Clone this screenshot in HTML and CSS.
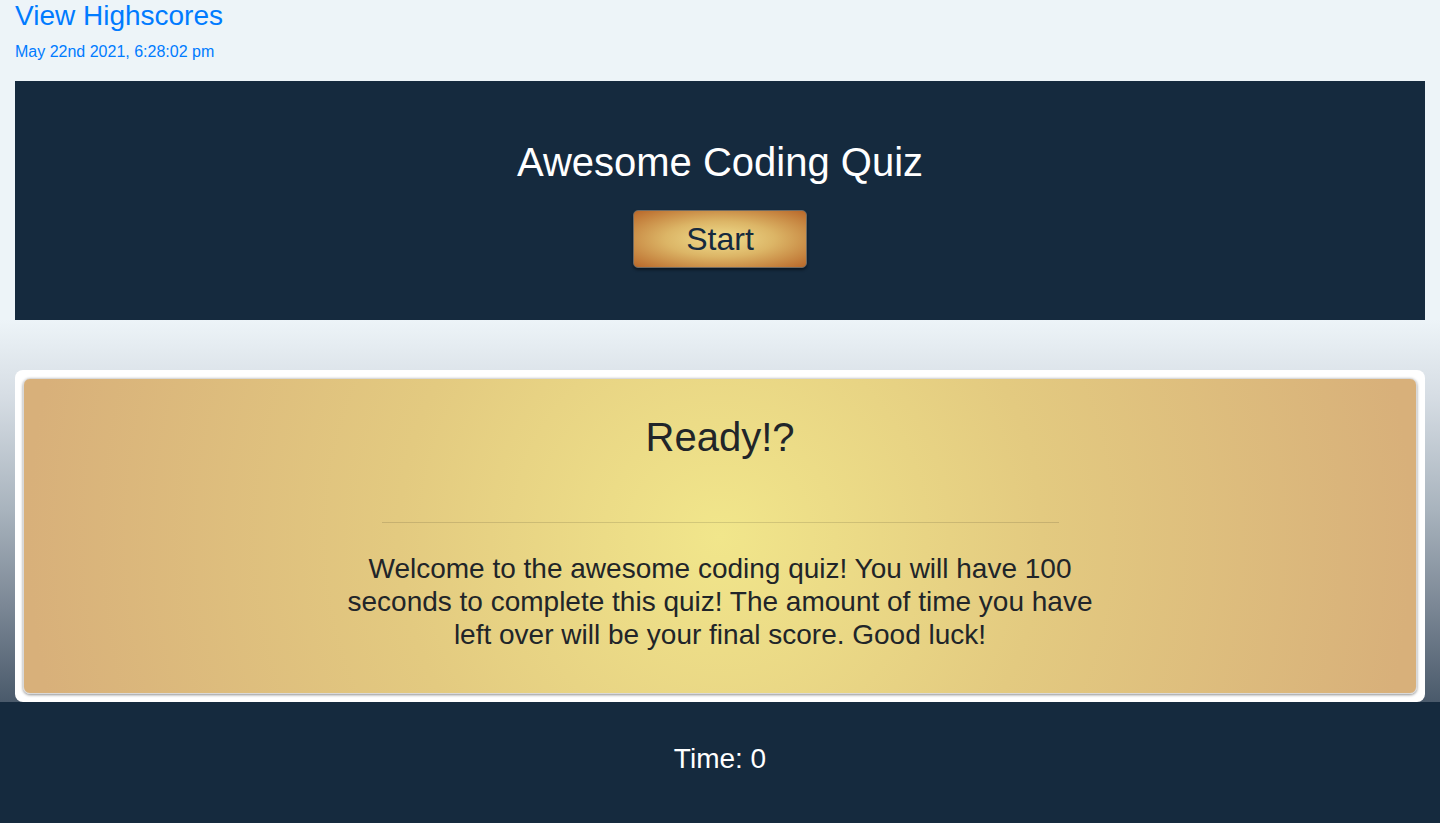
FILE: index.html
```html
<!DOCTYPE html>
<html lang="en">
<head>
<meta charset="utf-8">
<title>Awesome Coding Quiz</title>
<link rel="stylesheet" href="styles.css">
</head>
<body>
  <div class="top">
    <a class="highscores" href="#">View Highscores</a>
    <p class="date">May 22nd 2021, 6:28:02 pm</p>
  </div>
  <header class="hero">
    <h1 class="hero-title">Awesome Coding Quiz</h1>
    <button class="start-btn" type="button">Start</button>
  </header>
  <main class="stage">
    <div class="card-frame">
      <section class="card">
        <h2 class="card-title">Ready!?</h2>
        <hr class="card-rule">
        <p class="card-text">Welcome to the awesome coding quiz! You will have 100 seconds to complete this quiz! The amount of time you have left over will be your final score. Good luck!</p>
      </section>
    </div>
  </main>
  <footer class="footer">
    <p class="timer">Time: 0</p>
  </footer>
</body>
</html>
```

FILE: styles.css
```css
* { box-sizing: border-box; }

html, body {
  margin: 0;
  padding: 0;
}

body {
  font-family: "Liberation Sans", Arial, Helvetica, sans-serif;
  background: #edf4f8;
  color: #212529;
  min-height: 823px;
  display: flex;
  flex-direction: column;
}

.top {
  padding: 0 15px;
  display: flex;
  flex-direction: column;
  align-items: flex-start;
}

.highscores {
  color: #007bff;
  text-decoration: none;
  font-size: 28px;
  line-height: 32px;
}

.date {
  margin: 11px 0 0;
  color: #007bff;
  font-size: 16px;
  line-height: 18px;
}

.hero {
  margin: 20px 15px 0;
  height: 239px;
  background: #152a3e;
  display: flex;
  flex-direction: column;
  align-items: center;
  padding-top: 58px;
}

.hero-title {
  margin: 0;
  color: #ffffff;
  font-weight: 400;
  font-size: 40px;
  line-height: 46px;
}

.start-btn {
  margin-top: 25px;
  width: 174px;
  height: 58px;
  border: 1px solid #6f6a62;
  border-radius: 5px;
  background: radial-gradient(ellipse at center, #f0de8e 0%, #dcb566 45%, #b9682a 100%);
  box-shadow: 0 2px 3px rgba(0, 0, 0, 0.45);
  color: #152a3e;
  font-family: "Liberation Sans", Arial, Helvetica, sans-serif;
  font-size: 32px;
  line-height: 36px;
  padding: 0;
  cursor: pointer;
}

.stage {
  flex: 0 0 auto;
  height: 382px;
  padding: 50px 15px 0;
  background: linear-gradient(to bottom, #edf4f8 0%, #d6dde4 20%, #a8b3bd 50%, #7b8795 75%, #4a5a6b 100%);
}

.card-frame {
  height: 332px;
  background: #ffffff;
  border-radius: 8px;
  padding: 8px;
}

.card {
  height: 100%;
  border-radius: 7px;
  border: 1px solid #d9d9d9;
  background: radial-gradient(circle at center, #f1e68b 0%, #e3ca80 45%, #d8b07a 97%);
  box-shadow: 0 1px 3px rgba(0, 0, 0, 0.45);
  display: flex;
  flex-direction: column;
  align-items: center;
  padding-top: 34px;
}

.card-title {
  margin: 0;
  font-weight: 400;
  font-size: 40px;
  line-height: 48px;
  color: #212529;
}

.card-rule {
  margin: 61px 0 0;
  width: 677px;
  border: 0;
  border-top: 1px solid rgba(0, 0, 0, 0.12);
}

.card-text {
  margin: 29px 0 0;
  width: 760px;
  text-align: center;
  font-size: 28px;
  line-height: 33px;
  color: #212529;
}

.footer {
  flex: 1 0 auto;
  background: #152a3e;
  display: flex;
  justify-content: center;
  padding-top: 41px;
}

.timer {
  margin: 0;
  color: #ffffff;
  font-size: 28px;
  line-height: 32px;
}
```
